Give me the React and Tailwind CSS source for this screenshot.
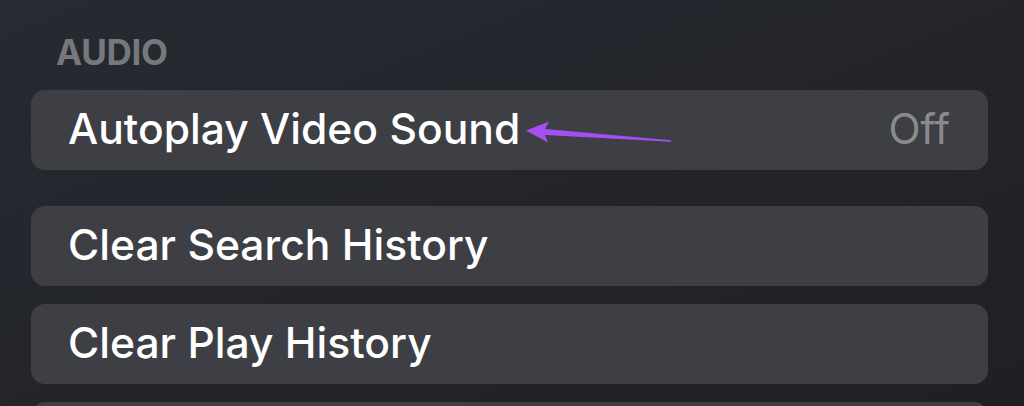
export default function App() {
  const font = { fontFamily: 'Inter, "Noto Sans", sans-serif' };
  return (
    <div
      className="relative w-[1024px] h-[406px] overflow-hidden bg-gradient-to-br from-[#272a31] via-[#23252b] to-[#1f2024]"
      style={font}
    >
      <div className="pl-[31px] pr-[36px] pt-[35px]">
        <div className="pl-[25px] h-[55px] text-[35px] leading-[34px] font-bold text-[#76787d] tracking-[-0.3px]">
          AUDIO
        </div>
        <div className="relative h-[80px] rounded-[14px] bg-[#3d3f45] flex items-center justify-between pl-[37px] pr-[38px] pb-[3px]">
          <span className="text-[42.6px] leading-[42px] font-medium text-white">Autoplay Video Sound</span>
          <span className="text-[42px] leading-[42px] text-[#8a8b8e]">Off</span>
          <svg
            className="absolute left-0 top-0"
            width="957"
            height="80"
            viewBox="31 90 957 80"
          >
            <path
              d="M526 130.5 L549 121.5 L545 129 L671 140.3 L671 141.8 L545 135 L548 142.5 Z"
              fill="#a54ff2"
            />
          </svg>
        </div>
        <div className="mt-[36px] h-[80px] rounded-[14px] bg-[#3d3f45] flex items-center pl-[37px] pb-[3px]">
          <span className="text-[42.6px] leading-[42px] font-medium text-white">Clear Search History</span>
        </div>
        <div className="mt-[18px] h-[80px] rounded-[14px] bg-[#3d3f45] flex items-center pl-[37px] pb-[3px]">
          <span className="text-[42.6px] leading-[42px] font-medium text-white">Clear Play History</span>
        </div>
        <div className="mt-[18px] h-[80px] rounded-[14px] bg-[#3d3f45]" />
      </div>
    </div>
  );
}
